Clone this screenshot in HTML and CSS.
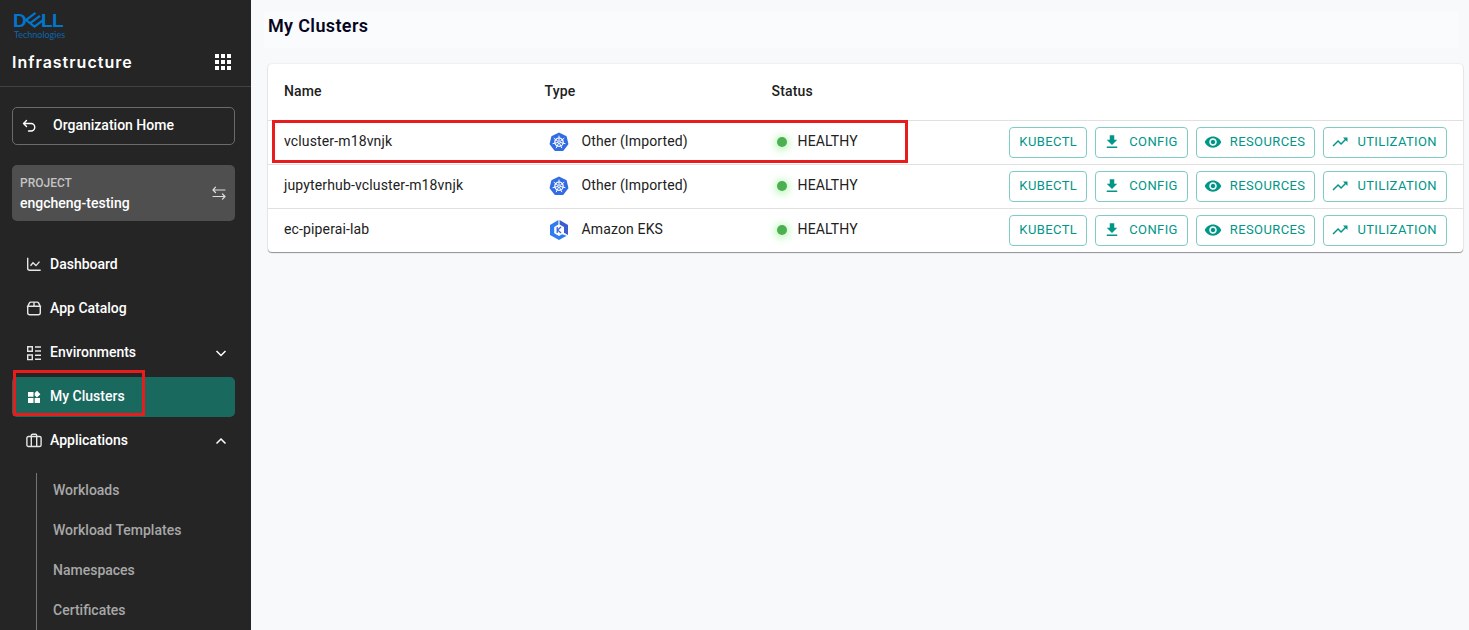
FILE: index.html
```html
<!DOCTYPE html>
<html lang="en">
<head>
<meta charset="utf-8">
<title>My Clusters</title>
<link rel="stylesheet" href="styles.css">
</head>
<body>
<svg class="sprite" aria-hidden="true">
  <symbol id="k8s" viewBox="0 0 20 20">
    <path fill="#326ce5" stroke="#326ce5" stroke-width="2" stroke-linejoin="round" d="M10 1.600 16.700 4.800 18.400 12 13.800 18H6.200L1.600 12 3.300 4.800z"/>
    <circle cx="10" cy="10.200" r="4.200" fill="none" stroke="#fff" stroke-width="1.200"/>
    <path stroke="#fff" stroke-width="1" stroke-linecap="round" d="M10 10.200V4M10 10.200l4.900-3.800M10 10.200l6 1.400M10 10.200l2.700 5.600M10 10.200l-2.700 5.600M10 10.200l-6 1.400M10 10.200l-4.900-3.800"/>
    <circle cx="10" cy="10.200" r="1.100" fill="#326ce5" stroke="#fff" stroke-width=".7"/>
  </symbol>
  <symbol id="eks" viewBox="0 0 20 20">
    <path fill="#2f7df0" d="M9.400 0v4.600L5.200 7v6.200L10 16l3-1.700 4.700 1.400L10 20 1 15V5z"/>
    <path fill="#3f5bd0" d="M10.600 0 19 5v10l-4-2.200V7l-4.400-2.400z"/>
    <path fill="none" stroke="#3b66d8" stroke-width="1.300" d="M8.200 7v6M12 7l-3.400 3.100L12 13"/>
  </symbol>
  <symbol id="download" viewBox="0 0 24 24"><path fill="currentColor" d="M19 9h-4V3H9v6H5l7 7zM5 18v2h14v-2z"/></symbol>
  <symbol id="eye" viewBox="0 0 24 24"><path fill="currentColor" d="M12 4.500C7 4.500 2.730 7.610 1 12c1.730 4.390 6 7.500 11 7.500s9.270-3.110 11-7.500c-1.730-4.390-6-7.500-11-7.500zM12 17c-2.760 0-5-2.240-5-5s2.240-5 5-5 5 2.240 5 5-2.240 5-5 5zm0-8c-1.660 0-3 1.340-3 3s1.340 3 3 3 3-1.340 3-3-1.340-3-3-3z"/></symbol>
  <symbol id="trend" viewBox="0 0 24 24"><path fill="currentColor" d="m16 6 2.290 2.290-4.880 4.880-4-4L2 16.590 3.410 18l6-6 4 4 6.300-6.290L22 12V6z"/></symbol>
</svg>
<div class="app">
  <aside class="sidebar">
    <header class="brand">
      <svg class="logo" viewBox="0 0 50 28" role="img" aria-label="Dell Technologies">
        <g class="logo-word">
          <text x="-1" y="15">D</text>
          <text x="27" y="15">L</text>
          <text x="38" y="15">L</text>
        </g>
        <path fill="none" stroke="#0076ce" stroke-width="2.200" d="M21.500 .8 12 8l8.500 6.700 9.500-7.200M16.200 11.200 26 3.800"/>
        <text class="logo-sub" x="0" y="26">Technologies</text>
      </svg>
      <div class="brand-row">
        <span class="brand-name">Infrastructure</span>
        <button class="icon-button" aria-label="Apps">
          <svg width="16" height="16" viewBox="0 0 16 16" fill="#fff"><path d="M0 0h4v4H0zM6 0h4v4H6zM12 0h4v4h-4zM0 6h4v4H0zM6 6h4v4H6zM12 6h4v4h-4zM0 12h4v4H0zM6 12h4v4H6zM12 12h4v4h-4z"/></svg>
        </button>
      </div>
    </header>
    <div class="sidebar-body">
      <a class="org-home" href="#">
        <svg width="14" height="14" viewBox="0 0 14 14" fill="none" stroke="currentColor" stroke-width="1.400" stroke-linecap="round" stroke-linejoin="round"><path d="M4.500 1.500 1.500 4.500l3 3M1.500 4.500H9a3.700 3.700 0 0 1 0 7.500H6.500"/></svg>
        <span class="label">Organization Home</span>
      </a>
      <button class="project">
        <span class="project-text"><span class="project-label">PROJECT</span><span>engcheng-testing</span></span>
        <svg width="14" height="14" viewBox="0 0 14 14" fill="none" stroke="#ddd" stroke-width="1.200" stroke-linecap="round" stroke-linejoin="round"><path d="M13 4H1M3.500 1.200 1 4l2.500 2.500M1 10.500h12M10.500 8l2.500 2.500-2.500 2.700"/></svg>
      </button>
      <nav class="nav">
        <a class="nav-item" href="#">
          <svg class="nav-icon" viewBox="0 0 16 16"><path d="M1.700 .8v10.500a2 2 0 0 0 2 2h11M4.500 8.800 7 5.800l3 2.800 3.500-4"/></svg>
          <span class="label">Dashboard</span></a>
        <a class="nav-item" href="#">
          <svg class="nav-icon" viewBox="0 0 16 16"><path d="M1.700 5.300v6.500a2 2 0 0 0 2 2h8.600a2 2 0 0 0 2-2V5.300M1.700 5.300l1.800-3.400a1.500 1.500 0 0 1 1.300-.8h6.400a1.500 1.500 0 0 1 1.300.8l1.800 3.400zM8 1.100v4.200"/></svg>
          <span class="label">App Catalog</span></a>
        <a class="nav-item" href="#">
          <svg class="nav-icon" viewBox="0 0 16 16"><path d="M1.700 1.700h4.600v4.600H1.700zM1.700 10h4.600v4.600H1.700zM9 2h6M9 6h6M9 10.300h6M9 14.300h6"/></svg>
          <span class="label">Environments</span>
          <svg class="chevron" viewBox="0 0 12 12"><path d="m1.500 4 4.500 4.500L10.500 4"/></svg></a>
        <a class="nav-item active" href="#" aria-current="page">
          <svg class="nav-icon solid" viewBox="0 0 16 16"><path d="M2 3h5.500v4.800H2zM2 9h5.500v5H2zM8.700 9H14v5H8.700zM11 1.800l3.400 3.400L11 8.500 8.700 6.500V4z"/></svg>
          <span class="label">My Clusters</span></a>
        <a class="nav-item" href="#">
          <svg class="nav-icon" viewBox="0 0 16 16"><path d="M2.500 3.500h11a1.600 1.600 0 0 1 1.600 1.600v6.800a1.600 1.600 0 0 1-1.600 1.600h-11A1.600 1.600 0 0 1 .9 11.900V5.100A1.600 1.600 0 0 1 2.500 3.500zM5.300 13.500v-11a1.200 1.200 0 0 1 1.200-1.200h3a1.200 1.200 0 0 1 1.200 1.200v11"/></svg>
          <span class="label">Applications</span>
          <svg class="chevron" viewBox="0 0 12 12"><path d="M1.500 8.500 6 4l4.500 4.500"/></svg></a>
        <div class="subnav">
          <a href="#">Workloads</a>
          <a href="#">Workload Templates</a>
          <a href="#">Namespaces</a>
          <a href="#">Certificates</a>
        </div>
      </nav>
    </div>
  </aside>
  <main class="main">
    <header class="page-header"><h1>My Clusters</h1></header>
    <section class="card">
      <table class="clusters">
        <thead>
          <tr><th class="col-name" scope="col">Name</th><th class="col-type" scope="col">Type</th><th class="col-status" scope="col">Status</th><td></td></tr>
        </thead>
        <tbody>
          <tr>
            <td>vcluster-m18vnjk</td>
            <td><span class="type"><svg><use href="#k8s"/></svg><span class="label">Other (Imported)</span></span></td>
            <td><span class="status"><span class="label">HEALTHY</span></span></td>
            <td><div class="actions">
              <button>KUBECTL</button>
              <button><svg><use href="#download"/></svg>CONFIG</button>
              <button><svg><use href="#eye"/></svg>RESOURCES</button>
              <button><svg><use href="#trend"/></svg>UTILIZATION</button>
            </div></td>
          </tr>
          <tr>
            <td>jupyterhub-vcluster-m18vnjk</td>
            <td><span class="type"><svg><use href="#k8s"/></svg><span class="label">Other (Imported)</span></span></td>
            <td><span class="status"><span class="label">HEALTHY</span></span></td>
            <td><div class="actions">
              <button>KUBECTL</button>
              <button><svg><use href="#download"/></svg>CONFIG</button>
              <button><svg><use href="#eye"/></svg>RESOURCES</button>
              <button><svg><use href="#trend"/></svg>UTILIZATION</button>
            </div></td>
          </tr>
          <tr>
            <td>ec-piperai-lab</td>
            <td><span class="type"><svg><use href="#eks"/></svg><span class="label">Amazon EKS</span></span></td>
            <td><span class="status"><span class="label">HEALTHY</span></span></td>
            <td><div class="actions">
              <button>KUBECTL</button>
              <button><svg><use href="#download"/></svg>CONFIG</button>
              <button><svg><use href="#eye"/></svg>RESOURCES</button>
              <button><svg><use href="#trend"/></svg>UTILIZATION</button>
            </div></td>
          </tr>
        </tbody>
      </table>
      <div class="row-marker"></div>
    </section>
  </main>
</div>
</body>
</html>
```
FILE: styles.css
```css
*, *::before, *::after { box-sizing: border-box; }

body {
  margin: 0;
  background: #f8f9fb;
  color: #212121;
  font: 14px/20px Roboto, "Liberation Sans", sans-serif;
}

button { font: inherit; cursor: pointer; }
a { color: inherit; text-decoration: none; }
.sprite { position: absolute; width: 0; height: 0; }
.label { padding-bottom: 2px; }

.app { display: flex; height: 100vh; }

/* Sidebar */
.sidebar {
  flex: none;
  width: 251px;
  overflow: hidden;
  background: #252525;
  color: #fff;
  font-weight: 500;
}

.brand { padding: 12px 16px 2px 12px; border-bottom: 1px solid #424242; }
.logo { display: block; width: 50px; height: 28px; margin-left: 2px; overflow: visible; }
.logo-word { fill: #0076ce; font: 700 19px "Liberation Sans", Arial, sans-serif; }
.logo-sub { fill: #0a66ae; font: 400 9px Lato, sans-serif; }
.brand-row { display: flex; align-items: center; justify-content: space-between; height: 44px; }
.brand-name { font: 600 16px/20px Inter, sans-serif; letter-spacing: 1px; }
.icon-button { display: flex; padding: 4px; border: 0; background: none; }

.sidebar-body { padding: 20px 16px 0 12px; }

.org-home {
  display: flex;
  align-items: center;
  gap: 17px;
  height: 38px;
  padding: 0 9px;
  border: 1px solid #6b6b6b;
  border-radius: 5px;
}

.project {
  display: flex;
  align-items: center;
  justify-content: space-between;
  width: 100%;
  height: 56px;
  margin-top: 20px;
  padding: 0 9px 0 8px;
  border: 0;
  border-radius: 5px;
  background: #4f4f4f;
  color: #fff;
  text-align: left;
}
.project-text { display: flex; flex-direction: column; }
.project-label { color: #c4c4c4; font-size: 12px; }

.nav { display: flex; flex-direction: column; gap: 4px; margin-top: 24px; }
.nav-item {
  position: relative;
  display: flex;
  align-items: center;
  gap: 8px;
  height: 40px;
  padding: 0 8px 0 14px;
  border-radius: 5px;
}
.nav-icon { width: 16px; height: 16px; fill: none; stroke: #e6e6e6; stroke-width: 1.4; }
.nav-icon.solid { fill: #fff; stroke: none; }
.chevron { width: 12px; height: 12px; margin-left: auto; fill: none; stroke: #fff; stroke-width: 1.5; }
.active { background: #1a695f; }
.active::after {
  content: "";
  position: absolute;
  inset: -7px auto 1px 1px;
  width: 132px;
  border: 3px solid #e81c1c;
}

.subnav {
  display: flex;
  flex-direction: column;
  gap: 6px;
  margin: 8px 0 0 24px;
  padding: 0 0 8px 16px;
  border-left: 1px solid #757575;
  color: #a8a8a8;
}
.subnav a { line-height: 34px; }

/* Page */
.main { flex: 1; min-width: 0; padding: 12px 6px 0 13px; }
.page-header { height: 36px; margin-right: 5px; padding: 2px 4px; background: #fafbfd; }
h1 { margin: 0; color: #05051e; font-size: 18px; line-height: 24px; font-weight: 600; letter-spacing: .02em; }

.card {
  position: relative;
  margin: 16px 0 0 4px;
  border-radius: 4px;
  background: #fff;
  box-shadow: 0 1px 1px #00000066, 0 0 2px #00000022;
}

.clusters { width: 100%; border-collapse: separate; border-spacing: 0; letter-spacing: .01em; }
.clusters th, .clusters td { padding: 0 16px; text-align: left; }
.clusters thead > tr > * { height: 57px; padding-bottom: 2px; border-bottom: 1px solid #e0e0e0; }
.clusters th { font-weight: 500; }
.clusters tbody td { height: 44px; border-bottom: 1px solid #e0e0e0; white-space: nowrap; }
.clusters tbody td:first-child { padding-bottom: 3px; }
.clusters tbody td:nth-child(2), .clusters tbody td:nth-child(3) { padding-bottom: 1px; }
.clusters tbody tr:last-child td { height: 43px; border-bottom: 0; }
.clusters .col-name { width: 21.8%; }
.clusters .col-type { width: 19%; }
.clusters .col-status { width: 19%; }

/* Outline over the first row */
.row-marker {
  position: absolute;
  top: 56px;
  left: 4px;
  width: 53.2%;
  height: 43px;
  border: 3px solid #e81c1c;
  pointer-events: none;
}

.type { display: flex; align-items: center; gap: 13px; padding-left: 4px; }
.type svg { width: 20px; height: 20px; }
.status { display: flex; align-items: center; gap: 11px; padding-left: 5px; }
.status::before {
  content: "";
  width: 10px;
  height: 10px;
  border-radius: 50%;
  background: #4caf50;
  box-shadow: 0 1px 8px 2px #b4f5b4;
}

.actions { display: flex; justify-content: flex-end; gap: 8px; }
.actions button {
  display: flex;
  align-items: center;
  height: 31px;
  padding: 0 9px 1px;
  border: 1px solid #80cbc4;
  border-radius: 4px;
  background: #fff;
  color: #009688;
  font-size: 13px;
  letter-spacing: .03em;
}
.actions svg { width: 18px; height: 18px; margin: 0 8px 0 -2px; }
```
